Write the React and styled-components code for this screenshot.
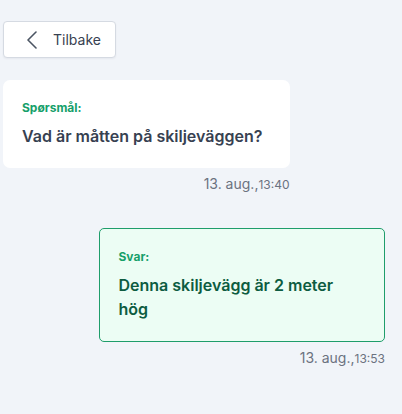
import React from "react";
import styled, { createGlobalStyle } from "styled-components";

const Global = createGlobalStyle`
  html, body { margin: 0; padding: 0; background: #f1f4f9; }
  body { font-family: Inter, "Noto Sans", sans-serif; -webkit-font-smoothing: antialiased; }
`;

const Page = styled.div`
  padding: 21px 17px 20px 3px;
  display: flex;
  flex-direction: column;
`;

const BackButton = styled.button`
  align-self: flex-start;
  display: flex;
  align-items: center;
  gap: 15px;
  height: 37px;
  width: 113px;
  padding: 0 0 0 22px;
  background: #ffffff;
  border: 1px solid #d5dae2;
  border-radius: 4px;
  box-shadow: 0 1px 2px rgba(16, 24, 40, 0.05);
  font-family: Inter, sans-serif;
  font-size: 14px;
  color: #374151;
  cursor: pointer;
`;

const Thread = styled.div`
  display: flex;
  flex-direction: column;
  margin-top: 22px;
  gap: 33px;
`;

const Message = styled.div`
  display: flex;
  flex-direction: column;
  align-self: ${(p) => (p.$mine ? "flex-end" : "flex-start")};
  width: 75%;
`;

const Card = styled.div`
  box-sizing: border-box;
  width: 100%;
  padding: 20px 19px;
  border-radius: ${(p) => (p.$answer ? "5px" : "7px")};
  background: ${(p) => (p.$answer ? "#ecfdf4" : "#ffffff")};
  border: ${(p) => (p.$answer ? "1px solid #1f9d6b" : "none")};
  display: flex;
  flex-direction: column;
  gap: 8px;
`;

const Label = styled.div`
  font-size: 12px;
  line-height: 16px;
  font-weight: 700;
  color: #16a06a;
`;

const Body = styled.div`
  font-size: 16px;
  line-height: 24px;
  font-weight: 600;
  color: ${(p) => (p.$answer ? "#0d5c41" : "#374151")};
`;

const Stamp = styled.div`
  margin-top: 6px;
  font-size: 14px;
  line-height: 20px;
  color: #6b7280;
  align-self: flex-end;
`;

const Time = styled.span`
  font-size: 12px;
`;

const Chevron = () => (
  <svg width="12" height="18" viewBox="0 0 12 18" fill="none">
    <path d="M10 1L2 9l8 8" stroke="#4b5563" strokeWidth="1.6" strokeLinecap="round" strokeLinejoin="round" />
  </svg>
);

export default function App() {
  return (
    <>
      <Global />
      <Page>
        <BackButton>
          <Chevron />
          Tilbake
        </BackButton>
        <Thread>
          <Message>
            <Card>
              <Label>Spørsmål:</Label>
              <Body>Vad är måtten på skiljeväggen?</Body>
            </Card>
            <Stamp>
              13. aug.,<Time>13:40</Time>
            </Stamp>
          </Message>
          <Message $mine>
            <Card $answer>
              <Label>Svar:</Label>
              <Body $answer>Denna skiljevägg är 2 meter hög</Body>
            </Card>
            <Stamp>
              13. aug.,<Time>13:53</Time>
            </Stamp>
          </Message>
        </Thread>
      </Page>
    </>
  );
}
